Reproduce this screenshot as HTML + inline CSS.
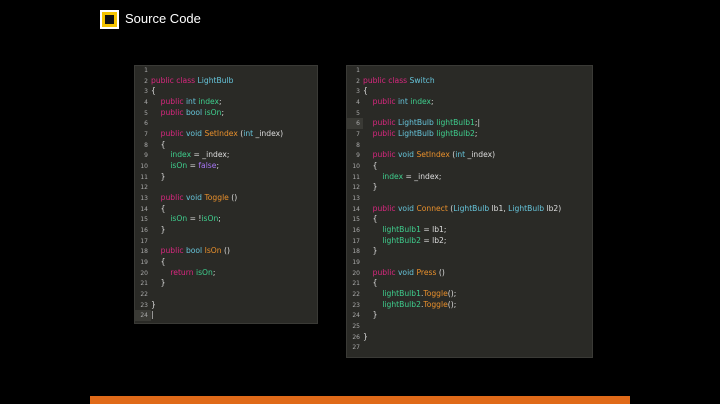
<!DOCTYPE html><html><head><style>
body{margin:0;width:720px;height:404px;background:#000;position:relative;overflow:hidden;font-family:"DejaVu Sans","Liberation Sans",sans-serif}
.logo{position:absolute;left:100px;top:10px;width:19px;height:19px;background:#f5c400;border:2px solid #fff;box-sizing:border-box}
.logo i{position:absolute;left:3px;top:3px;width:9px;height:9px;background:#111;border:0}
.title{position:absolute;left:125px;top:11px;color:#fff;font:13px "Liberation Sans",sans-serif}
.p{position:absolute;background:#2a2a26;font-size:7.6px;color:#ddd;box-shadow:0 0 0 1px #3a3a36}
.l{position:absolute;left:0;height:10.66px;line-height:10.66px;white-space:pre}
.n{display:inline-block;width:13px;text-align:right;color:#aaa;font-size:6px;margin-right:3px}
.k{color:#d9277f}.t{color:#66c4da}.v{color:#3fcf8e}.m{color:#e9902c}.f{color:#a675f5}
.bar{position:absolute;left:90px;top:396px;width:540px;height:8px;background:#e06a19}
</style></head><body>
<div class="logo"><i></i></div><div class="title">Source Code</div>
<div class="p" style="left:135px;top:66px;width:182px;height:257px">
<div style="position:absolute;left:0;top:244px;width:16px;height:11px;background:#3a3a35"></div>
<div class="l" style="top:-1px"><span class="n">1</span></div>
<div class="l" style="top:9.7px"><span class="n">2</span><span class="k">public class</span> <span class="t">LightBulb</span></div>
<div class="l" style="top:20.3px"><span class="n">3</span>{</div>
<div class="l" style="top:31px"><span class="n">4</span>    <span class="k">public</span> <span class="t">int</span> <span class="v">index</span>;</div>
<div class="l" style="top:41.6px"><span class="n">5</span>    <span class="k">public</span> <span class="t">bool</span> <span class="v">isOn</span>;</div>
<div class="l" style="top:52.3px"><span class="n">6</span></div>
<div class="l" style="top:63px"><span class="n">7</span>    <span class="k">public</span> <span class="t">void</span> <span class="m">SetIndex</span> (<span class="t">int</span> _index)</div>
<div class="l" style="top:73.6px"><span class="n">8</span>    {</div>
<div class="l" style="top:84.3px"><span class="n">9</span>        <span class="v">index</span> = _index;</div>
<div class="l" style="top:95px"><span class="n">10</span>        <span class="v">isOn</span> = <span class="f">false</span>;</div>
<div class="l" style="top:105.6px"><span class="n">11</span>    }</div>
<div class="l" style="top:116.3px"><span class="n">12</span></div>
<div class="l" style="top:127px"><span class="n">13</span>    <span class="k">public</span> <span class="t">void</span> <span class="m">Toggle</span> ()</div>
<div class="l" style="top:137.6px"><span class="n">14</span>    {</div>
<div class="l" style="top:148.3px"><span class="n">15</span>        <span class="v">isOn</span> = !<span class="v">isOn</span>;</div>
<div class="l" style="top:159px"><span class="n">16</span>    }</div>
<div class="l" style="top:169.6px"><span class="n">17</span></div>
<div class="l" style="top:180.3px"><span class="n">18</span>    <span class="k">public</span> <span class="t">bool</span> <span class="m">IsOn</span> ()</div>
<div class="l" style="top:191px"><span class="n">19</span>    {</div>
<div class="l" style="top:201.6px"><span class="n">20</span>        <span class="k">return</span> <span class="v">isOn</span>;</div>
<div class="l" style="top:212.3px"><span class="n">21</span>    }</div>
<div class="l" style="top:223px"><span class="n">22</span></div>
<div class="l" style="top:233.6px"><span class="n">23</span>}</div>
<div class="l" style="top:244.3px"><span class="n">24</span>|</div>
</div>
<div class="p" style="left:347px;top:66px;width:245px;height:291px">
<div style="position:absolute;left:0;top:52px;width:16px;height:11px;background:#3a3a35"></div>
<div class="l" style="top:-1px"><span class="n">1</span></div>
<div class="l" style="top:9.7px"><span class="n">2</span><span class="k">public class</span> <span class="t">Switch</span></div>
<div class="l" style="top:20.3px"><span class="n">3</span>{</div>
<div class="l" style="top:31px"><span class="n">4</span>    <span class="k">public</span> <span class="t">int</span> <span class="v">index</span>;</div>
<div class="l" style="top:41.6px"><span class="n">5</span></div>
<div class="l" style="top:52.3px"><span class="n">6</span>    <span class="k">public</span> <span class="t">LightBulb</span> <span class="v">lightBulb1</span>;|</div>
<div class="l" style="top:63px"><span class="n">7</span>    <span class="k">public</span> <span class="t">LightBulb</span> <span class="v">lightBulb2</span>;</div>
<div class="l" style="top:73.6px"><span class="n">8</span></div>
<div class="l" style="top:84.3px"><span class="n">9</span>    <span class="k">public</span> <span class="t">void</span> <span class="m">SetIndex</span> (<span class="t">int</span> _index)</div>
<div class="l" style="top:95px"><span class="n">10</span>    {</div>
<div class="l" style="top:105.6px"><span class="n">11</span>        <span class="v">index</span> = _index;</div>
<div class="l" style="top:116.3px"><span class="n">12</span>    }</div>
<div class="l" style="top:127px"><span class="n">13</span></div>
<div class="l" style="top:137.6px"><span class="n">14</span>    <span class="k">public</span> <span class="t">void</span> <span class="m">Connect</span> (<span class="t">LightBulb</span> lb1, <span class="t">LightBulb</span> lb2)</div>
<div class="l" style="top:148.3px"><span class="n">15</span>    {</div>
<div class="l" style="top:159px"><span class="n">16</span>        <span class="v">lightBulb1</span> = lb1;</div>
<div class="l" style="top:169.6px"><span class="n">17</span>        <span class="v">lightBulb2</span> = lb2;</div>
<div class="l" style="top:180.3px"><span class="n">18</span>    }</div>
<div class="l" style="top:191px"><span class="n">19</span></div>
<div class="l" style="top:201.6px"><span class="n">20</span>    <span class="k">public</span> <span class="t">void</span> <span class="m">Press</span> ()</div>
<div class="l" style="top:212.3px"><span class="n">21</span>    {</div>
<div class="l" style="top:223px"><span class="n">22</span>        <span class="v">lightBulb1</span>.<span class="m">Toggle</span>();</div>
<div class="l" style="top:233.6px"><span class="n">23</span>        <span class="v">lightBulb2</span>.<span class="m">Toggle</span>();</div>
<div class="l" style="top:244.3px"><span class="n">24</span>    }</div>
<div class="l" style="top:255px"><span class="n">25</span></div>
<div class="l" style="top:265.6px"><span class="n">26</span>}</div>
<div class="l" style="top:276.3px"><span class="n">27</span></div>
</div>
<div class="bar"></div>
</body></html>
